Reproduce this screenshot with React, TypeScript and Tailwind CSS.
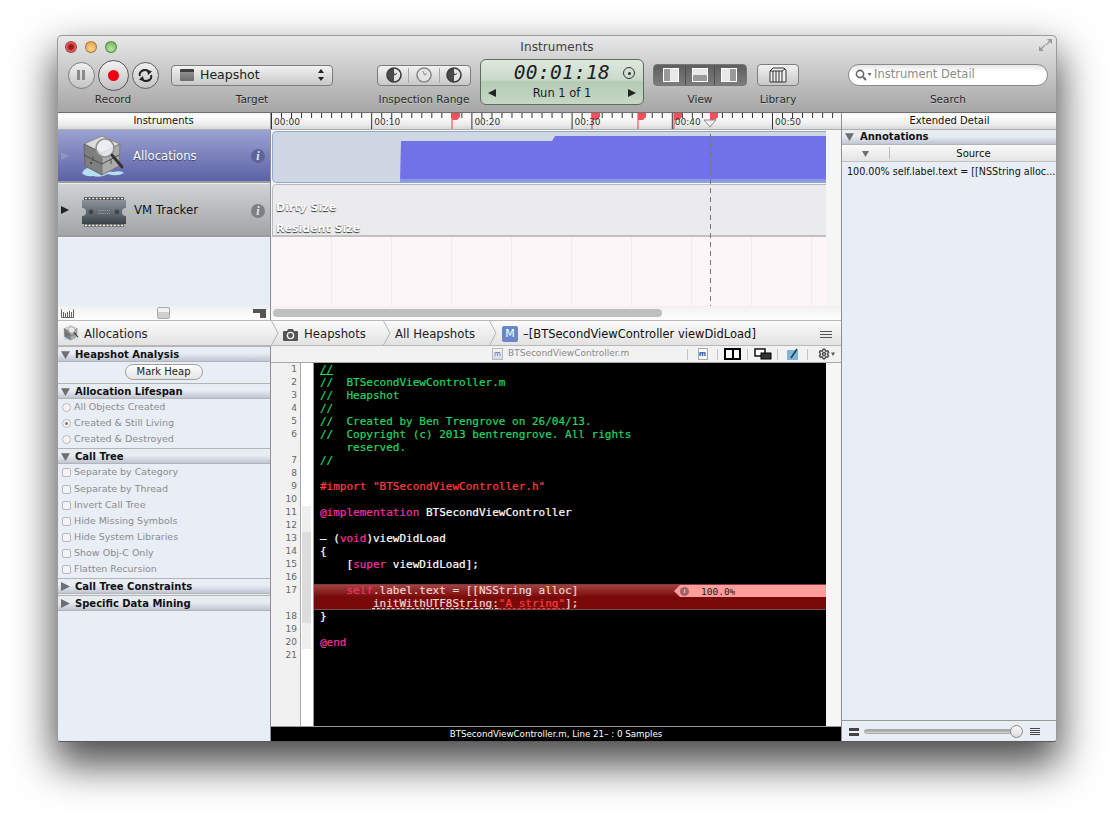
import React from "react";
import { Settings } from "lucide-react";

const Tri = ({ dir = "down", cls = "text-[#6f6f6f]", s = 8 }: { dir?: "down" | "right" | "left"; cls?: string; s?: number }) => (
  <svg width={s} height={s} viewBox="0 0 8 8" className={`${cls} shrink-0`}>
    <polygon points={dir === "down" ? "0,1 8,1 4,8" : dir === "right" ? "0,0 8,4 0,8" : "8,0 0,4 8,8"} fill="currentColor" />
  </svg>
);

const Light = ({ c }: { c: string }) => (
  <div className={`w-[12px] h-[12px] rounded-full border border-[#0000004d] flex items-center justify-center ${c}`} />
);

const Label = ({ children }: { children: React.ReactNode }) => (
  <div className="text-[10.5px] leading-[14px] text-[#2a2a2a] [text-shadow:0_1px_0_#ffffff55] whitespace-nowrap">{children}</div>
);

const ClockIcon = ({ mode }: { mode: "l" | "m" | "r" }) => (
  <svg width="18" height="18" viewBox="0 0 18 18">
    <circle cx="9" cy="9" r="7" fill="#e4e4e4" />
    {mode !== "m" && <path d="M9 2 A7 7 0 0 0 9 16 Z" fill="#4a4a4a" />}
    <circle cx="9" cy="9" r="7" fill="none" stroke={mode === "m" ? "#8a8a8a" : "#3d3d3d"} strokeWidth="1.6" />
    <path d="M8 5 L9.5 9 L12 7.5" fill="none" stroke={mode === "m" ? "#8a8a8a" : "#3d3d3d"} strokeWidth="1" />
  </svg>
);

const ViewIcon = ({ v }: { v: "l" | "b" | "r" }) => (
  <div className="w-[16px] h-[14px] bg-[#e8e8e8] border border-white relative overflow-hidden flex">
    {v === "l" && <div className="w-[6px] h-full bg-[#9a9a9a]" />}
    {v === "b" && <div className="w-full h-[6px] bg-[#9a9a9a] mt-auto" />}
    {v === "r" && <div className="w-[6px] h-full bg-[#9a9a9a] ml-auto" />}
  </div>
);

const CubeIcon = ({ size = 44 }: { size?: number }) => (
  <svg width={size} height={size} viewBox="0 0 44 44">
    <path d="M1 39 Q5 32 11 35 L32 38 Q41 36 43 39 Q36 43 27 40 Q20 44 12 42 Q5 43 1 39 Z" fill="#b5e0f4" />
    <g strokeLinejoin="round">
      <polygon points="21,2 39,10 21,19 3,10" fill="#dcdcdc" stroke="#8a8a8a" strokeWidth="1" />
      <polygon points="3,10 21,19 21,41 4,32" fill="#7f7f7f" stroke="#666" strokeWidth="1" />
      <polygon points="39,10 21,19 21,41 38,32" fill="#ababab" stroke="#7a7a7a" strokeWidth="1" />
    </g>
    <path d="M3 21 L21 30 L38 21 M12 22 L12 27 M30 25 L30 30" stroke="#4d4d4d" strokeWidth="1" fill="none" />
    <circle cx="10" cy="29" r="1" fill="#333" />
    <circle cx="24" cy="14" r="9" fill="#eef1f4" fillOpacity=".82" stroke="#8f8f8f" strokeWidth="1.6" />
    <path d="M31 21 L41 33" stroke="#333" strokeWidth="2.8" strokeLinecap="round" />
  </svg>
);

const ChipIcon = () => (
  <svg width="44" height="30" viewBox="0 0 44 30">
    <defs>
      <linearGradient id="chipBody" x1="0" y1="0" x2="0" y2="1">
        <stop offset="0" stopColor="#8a949a" />
        <stop offset=".55" stopColor="#5f696f" />
        <stop offset="1" stopColor="#3a4247" />
      </linearGradient>
    </defs>
    <rect x="2" y="0" width="40" height="3" fill="#4f4f4f" />
    <rect x="2" y="27" width="40" height="3" fill="#6a6a6a" />
    <path d="M3 1.5 h38 M3 28.5 h38" stroke="#f2f2f2" strokeWidth="1.4" strokeDasharray="2 1.6" />
    <path d="M0 3 H44 V11 A4 4 0 0 0 44 19 V27 H0 V19 A4 4 0 0 0 0 11 Z" fill="url(#chipBody)" />
    <circle cx="9" cy="15" r="2.4" fill="#3f474c" />
    <circle cx="35" cy="15" r="2.4" fill="#3f474c" />
    <path d="M16 13.5 h12 M16 16.5 h12" stroke="#8d979c" strokeWidth="1" strokeDasharray="1.5 .7" />
  </svg>
);

const CameraIcon = () => (
  <svg width="15" height="13" viewBox="0 0 15 13" className="shrink-0">
    <path d="M1 3 H4 L5 1 H10 L11 3 H14 Q15 3 15 4 V12 Q15 13 14 13 H1 Q0 13 0 12 V4 Q0 3 1 3 Z" fill="#555" />
    <circle cx="7.5" cy="7.5" r="3.8" fill="#f0f0f0" />
    <circle cx="7.5" cy="7.5" r="2.4" fill="#555" />
  </svg>
);

const Chevron = () => (
  <svg width="8" height="26" viewBox="0 0 8 26" className="shrink-0">
    <path d="M0 0 L7 13 L0 26" fill="none" stroke="#b5b5b5" strokeWidth="1" />
  </svg>
);

const Section = ({ title, open = true }: { title: string; open?: boolean }) => (
  <div className="h-[16px] shrink-0 flex items-center pl-[4px] border-y border-[#b4b4b4] bg-[linear-gradient(#e8ecf3_0%,#e8ecf3_45%,#bfc5d3_100%)] text-[10px] font-bold text-[#111] -mb-[1px]">
    <Tri dir={open ? "down" : "right"} s={9} />
    <span className="ml-[5px]">{title}</span>
  </div>
);

const Opt = ({ label, kind, on }: { label: string; kind: "r" | "c"; on?: boolean }) => (
  <div className="h-[16px] flex items-center pl-[5px] text-[9.5px] text-[#8c8c8c] whitespace-nowrap">
    <div className={`w-[9px] h-[9px] border border-[#b8b8b8] bg-[#f3f4f7] flex items-center justify-center ${kind === "r" ? "rounded-full" : "rounded-[2px]"}`}>
      {on && <div className="w-[3px] h-[3px] rounded-full bg-[#777]" />}
    </div>
    <span className="ml-[3px]">{label}</span>
  </div>
);

const G = "text-[#1fd765]";
const P = "text-[#f5309f]";
const R = "text-[#ff3d3d]";

type Line = { n?: number; c?: React.ReactNode; m?: "l" | "d" };
const lines: Line[] = [
  { n: 1, c: <span className={`${G} underline`}>//</span> },
  { n: 2, c: <span className={G}>//  BTSecondViewController.m</span> },
  { n: 3, c: <span className={G}>//  Heapshot</span> },
  { n: 4, c: <span className={G}>//</span> },
  { n: 5, c: <span className={G}>//  Created by Ben Trengrove on 26/04/13.</span> },
  { n: 6, c: <span className={G}>//  Copyright (c) 2013 bentrengrove. All rights</span> },
  { c: <span className={G}>    reserved.</span> },
  { n: 7, c: <span className={G}>//</span> },
  { n: 8 },
  { n: 9, c: <span className={R}>#import "BTSecondViewController.h"</span> },
  { n: 10 },
  { n: 11, m: "l", c: <><span className={P}>@implementation</span> BTSecondViewController</> },
  { n: 12, m: "l" },
  { n: 13, m: "d", c: <>– (<span className={P}>void</span>)viewDidLoad</> },
  { n: 14, m: "d", c: "{" },
  { n: 15, m: "d", c: <>    [<span className={P}>super</span> viewDidLoad];</> },
  { n: 16, m: "d" },
];
const after: Line[] = [
  { n: 18, m: "d", c: "}" },
  { n: 19, m: "l" },
  { n: 20, m: "l", c: <span className={P}>@end</span> },
  { n: 21 },
];

const Gutter = ({ n, m, h = "h-[13px]" }: { n?: number; m?: "l" | "d"; h?: string }) => (
  <div className={`flex shrink-0 ${h}`}>
    <div className="w-[30px] shrink-0 pr-[3px] text-right text-[9px] leading-[13px] text-[#666] bg-[#f1f1f1] border-r border-[#aaa] font-['DejaVu_Sans']">{n}</div>
    <div className="w-[13px] shrink-0 bg-white pl-[1px] pr-[2px] border-r border-[#999]">
      <div className={`h-full ${m === "d" ? "bg-[#dcdcdc]" : m === "l" ? "bg-[#efefef]" : ""}`} />
    </div>
  </div>
);

const CodeLine = ({ l }: { l: Line }) => (
  <div className="flex h-[13px] leading-[13px]">
    <Gutter n={l.n} m={l.m} />
    <pre className="flex-1 bg-black text-white pl-[6px] font-['DejaVu_Sans_Mono'] text-[11px] leading-[13px] [-webkit-text-stroke:0.2px] whitespace-pre overflow-hidden">{l.c}</pre>
  </div>
);

const Cell = ({ children }: { children: React.ReactNode }) => (
  <div className="w-[30px] shrink-0 h-[11px] border-l border-[#c4c4c4] flex items-center justify-center">{children}</div>
);

export default function App() {
  const minor = Array.from({ length: 57 }, (_, i) => i);
  return (
    <div className="w-[1114px] h-[821px] bg-white overflow-hidden pt-[35px] pl-[57px] font-['DejaVu_Sans',sans-serif]">
      <div className="w-[1000px] h-[707px] relative rounded-t-[5px] rounded-b-[3px] flex flex-col bg-[#e9edf6] shadow-[0_20px_40px_3px_rgba(0,0,0,0.7)]">
        <div className="absolute inset-0 z-10 pointer-events-none rounded-t-[5px] rounded-b-[3px] border border-[#9a9a9a] border-b-[#5a5a5a]" />
        {/* toolbar */}
        <div className="h-[78px] shrink-0 rounded-t-[5px] bg-[linear-gradient(#e9e9e9,#d4d4d4_30%,#a6a6a6)] border-b border-[#6f6f6f] relative">
          <div className="h-[23px] flex items-center px-[8px] relative">
            <div className="flex gap-[8px]">
              <Light c="bg-[radial-gradient(circle,#a01818_25%,#f0686a_70%)]" />
              <Light c="bg-[radial-gradient(circle_at_50%_70%,#fcd38a,#e89a3e)]" />
              <Light c="bg-[radial-gradient(circle_at_50%_70%,#b8e8a2,#62ab50)]" />
            </div>
            <div className="flex-1 text-center text-[12px] text-[#3f3f3f] pr-[52px] tracking-[0.1px]">Instruments</div>
            <svg width="15" height="14" viewBox="0 0 15 14" className="absolute right-[4px] top-[3px]">
              <path d="M9 1 H14 V6 Z M1 13 V8 L6 13 Z" fill="#9a9a9a" />
              <path d="M12 3 L8 7 M3 11 L7 7" stroke="#9a9a9a" strokeWidth="1.2" />
            </svg>
          </div>
          <div className="flex items-start pl-[10px]">
            {/* record */}
            <div className="flex flex-col items-center w-[92px]">
              <div className="h-[34px] flex items-center gap-[3px]">
                <div className="w-[27px] h-[27px] rounded-full border border-[#7d7d7d] bg-[linear-gradient(#f0f0f0,#c4c4c4)] flex items-center justify-center gap-[2px]">
                  <div className="w-[3px] h-[10px] bg-[#8a8a8a]" />
                  <div className="w-[3px] h-[10px] bg-[#8a8a8a]" />
                </div>
                <div className="w-[31px] h-[31px] rounded-full border border-[#555] bg-[linear-gradient(#f2f2f2,#c0c0c0)] flex items-center justify-center">
                  <div className="w-[11px] h-[11px] rounded-full bg-[#f00012]" />
                </div>
                <div className="w-[27px] h-[27px] rounded-full border border-[#5f5f5f] bg-[linear-gradient(#f0f0f0,#c4c4c4)] flex items-center justify-center">
                  <svg width="15" height="13" viewBox="0 0 15 13">
                    <path d="M2 7 A5 4.5 0 0 1 11 3.2 M13 6 A5 4.5 0 0 1 4 9.8" fill="none" stroke="#222" strokeWidth="2" />
                    <path d="M9 0.5 L14 2.5 L10 6 Z M6 12.5 L1 10.5 L5 7 Z" fill="#222" />
                  </svg>
                </div>
              </div>
              <Label>Record</Label>
            </div>
            {/* target */}
            <div className="flex flex-col items-center w-[162px] ml-[12px]">
              <div className="h-[34px] flex items-center w-full">
                <div className="w-full h-[21px] rounded-[4px] border border-[#7d7d7d] bg-[linear-gradient(#f2f2f2,#c8c8c8)] flex items-center pl-[8px] pr-[8px]">
                  <div className="w-[14px] h-[12px] bg-[linear-gradient(#3d3d3d_25%,#8f8f8f_25%,#6d6d6d)] rounded-[1px]" />
                  <span className="ml-[6px] text-[12.5px] text-[#222] flex-1">Heapshot</span>
                  <svg width="6" height="12" viewBox="0 0 6 12"><path d="M3 0 L6 4 H0 Z M3 12 L6 8 H0 Z" fill="#222" /></svg>
                </div>
              </div>
              <Label>Target</Label>
            </div>
            {/* inspection */}
            <div className="flex flex-col items-center w-[94px] ml-[44px]">
              <div className="h-[34px] flex items-center w-full">
                <div className="w-full h-[21px] rounded-[4px] border border-[#7d7d7d] bg-[linear-gradient(#f2f2f2,#c8c8c8)] flex items-center justify-around px-[4px]">
                  <ClockIcon mode="l" />
                  <div className="w-px h-[15px] bg-[#a5a5a5]" />
                  <ClockIcon mode="m" />
                  <div className="w-px h-[15px] bg-[#a5a5a5]" />
                  <ClockIcon mode="r" />
                </div>
              </div>
              <Label>Inspection Range</Label>
            </div>
            {/* lcd */}
            <div className="w-[164px] h-[46px] ml-[9px] mt-[1px] rounded-[6px] border border-[#5d6b5d] bg-[linear-gradient(#dfe9df,#c9d9c9_45%,#b4ccb4_50%,#c5d8c3)] flex flex-col items-center px-[6px]">
              <div className="h-[26px] w-full flex items-center justify-center relative">
                <span className="font-['DejaVu_Sans_Mono'] italic font-light text-[19.5px] tracking-[0.3px] text-[#1e1e1e]">00:01:18</span>
                <div className="absolute right-[2px] top-[7px] w-[12px] h-[12px] rounded-full border border-[#333] flex items-center justify-center">
                  <div className="w-[3px] h-[3px] rounded-full bg-[#333]" />
                </div>
              </div>
              <div className="flex w-full items-center justify-between text-[11.5px] text-[#1a1a1a] leading-[14px] px-[1px]">
                <Tri dir="left" cls="text-[#222]" />
                <span>Run 1 of 1</span>
                <Tri dir="right" cls="text-[#222]" />
              </div>
            </div>
            {/* view */}
            <div className="flex flex-col items-center w-[94px] ml-[9px]">
              <div className="h-[34px] flex items-center w-full">
                <div className="w-full h-[22px] rounded-[4px] bg-[linear-gradient(#5e5e5e,#7c7c7c)] border border-[#777] flex items-center justify-around px-[6px]">
                  <ViewIcon v="l" />
                  <div className="w-px h-full bg-[#4e4e4e]" />
                  <ViewIcon v="b" />
                  <div className="w-px h-full bg-[#4e4e4e]" />
                  <ViewIcon v="r" />
                </div>
              </div>
              <Label>View</Label>
            </div>
            {/* library */}
            <div className="flex flex-col items-center w-[42px] ml-[10px]">
              <div className="h-[34px] flex items-center w-full">
                <div className="w-full h-[22px] rounded-[4px] border border-[#7d7d7d] bg-[linear-gradient(#f2f2f2,#c8c8c8)] flex items-center justify-center">
                  <svg width="18" height="16" viewBox="0 0 18 16">
                    <path d="M1 4 L4 1 H15 L17 3 V15 H1 Z M1 4 H13 V15 M4 4 V15 M7 4 V15 M10 4 V15 M13 4 L16 2" fill="#eee" stroke="#333" strokeWidth="1" />
                  </svg>
                </div>
              </div>
              <Label>Library</Label>
            </div>
            {/* search */}
            <div className="flex flex-col items-center w-[200px] ml-[49px]">
              <div className="h-[34px] flex items-center w-full">
                <div className="w-full h-[22px] rounded-full border border-[#8a8a8a] bg-[linear-gradient(#e6e6e6,#ffffff_35%)] flex items-center pl-[6px]">
                  <svg width="17" height="12" viewBox="0 0 17 12">
                    <circle cx="5" cy="5" r="3.6" fill="none" stroke="#666" strokeWidth="1.6" />
                    <path d="M8 8 L11 11" stroke="#666" strokeWidth="2" />
                    <path d="M12.5 4 H16.5 L14.5 7 Z" fill="#666" />
                  </svg>
                  <span className="ml-[2px] text-[11.5px] text-[#8c8c8c]">Instrument Detail</span>
                </div>
              </div>
              <Label>Search</Label>
            </div>
          </div>
        </div>

        {/* body */}
        <div className="flex flex-1 min-h-0 rounded-b-[3px] overflow-hidden">
          <div className="flex-1 min-w-0 flex flex-col">
            {/* upper */}
            <div className="h-[207px] shrink-0 flex flex-col relative">
              <div className="flex h-[17px] shrink-0 bg-[linear-gradient(#f4f4f4,#ffffff_20%,#ececec_70%,#d8d8d8)] border-b border-[#b0b0b0]">
                <div className="w-[214px] shrink-0 text-center text-[10px] leading-[16px] text-[#111] border-r border-[#999]">Instruments</div>
                <div className="flex-1 relative overflow-hidden">
                  <svg width="570" height="16" viewBox="0 0 570 16" className="absolute left-0 top-0">
                    {minor.map((i) => (
                      <line key={i} x1={i * 10.02 + 0.5} x2={i * 10.02 + 0.5} y1="0" y2={i % 10 === 0 ? 16 : 5} stroke="#333" strokeWidth="1" />
                    ))}
                    {[181, 321, 367, 403].map((x) => (
                      <g key={x}>
                        <line x1={x} x2={x} y1="0" y2="16" stroke="#f03a46" strokeWidth="1" />
                        <path d={`M${x} 0 h8 v4 l-3 3 h-5 Z`} fill="#f4505c" />
                      </g>
                    ))}
                    <path d="M439 0 h8 v4 l-3 3 h-5 Z" fill="#f4505c" />
                    <path d="M433 7 H445 L439 14 Z" fill="#f4f4f4" stroke="#8a8a8a" />
                  </svg>
                  <div className="absolute left-0 top-0 flex text-[9px] leading-[16px] text-[#333]">
                    {["00:00", "00:10", "00:20", "00:30", "00:40", "00:50"].map((t) => (
                      <div key={t} className="w-[100.2px] pl-[3px] pt-[1px]">{t}</div>
                    ))}
                  </div>
                </div>
              </div>
              <div className="flex flex-1 min-h-0">
                {/* track list */}
                <div className="w-[214px] shrink-0 border-r border-[#8f8f8f] flex flex-col">
                  <div className="h-[53px] flex items-center pl-[4px] pr-[5px] bg-[linear-gradient(#9aa2d2,#5c62a6)] border-b-[2px] border-[#9b9b9b]">
                    <Tri dir="right" cls="text-[#8f95c0]" />
                    <div className="ml-[12px]"><CubeIcon /></div>
                    <span className="ml-[8px] pt-[2px] text-[11.7px] text-white flex-1 [text-shadow:0_1px_1px_#00000080]">Allocations</span>
                    <div className="w-[14px] h-[14px] rounded-full bg-[#5f6599] text-[#e8e8f4] text-[12px] font-bold italic font-['Liberation_Serif'] flex items-center justify-center">i</div>
                  </div>
                  <div className="h-[53px] mt-[1px] flex items-center pl-[4px] pr-[5px] bg-[linear-gradient(#d0d3d5,#a2a5a8)] border-b-[2px] border-[#9b9b9b]">
                    <Tri dir="right" cls="text-[#222]" />
                    <div className="ml-[13px] mt-[4px]"><ChipIcon /></div>
                    <span className="ml-[8px] pt-[3px] text-[11.7px] text-[#111] flex-1">VM Tracker</span>
                    <div className="w-[14px] h-[14px] mt-[2px] rounded-full bg-[#7d7f82] text-[#e8e8e8] text-[12px] font-bold italic font-['Liberation_Serif'] flex items-center justify-center">i</div>
                  </div>
                  <div className="flex-1 bg-[#e9edf6]" />
                  <div className="h-[14px] bg-[linear-gradient(#f0f0f0,#ffffff)] flex items-center justify-between px-[4px] relative">
                    <svg width="13" height="9" viewBox="0 0 13 9"><path d="M.5.5 V8.5 H12.5 V.5 M2.5 8 V3 M4.5 8 V4 M6.5 8 V3 M8.5 8 V2 M10.5 8 V3" fill="none" stroke="#666" /></svg>
                    <div className="w-[13px] h-[12px] rounded-[2px] border border-[#aaa] bg-[linear-gradient(#f2f2f2_45%,#cfcfcf_45%)]" />
                    <svg width="13" height="9" viewBox="0 0 13 9"><path d="M0 0 H13 V9 H7 V4 H0 Z" fill="#555" /></svg>
                  </div>
                </div>
                {/* tracks */}
                <div className="flex-1 flex flex-col min-w-0 relative bg-[#f6f6f6]">
                  <div className="h-[53px] pt-[1px] pr-[15px] pl-[1px]">
                    <div className="h-[52px] rounded-l-[5px] border border-[#8eaad0] border-r-0 bg-[#cfd7e3] overflow-hidden">
                      <svg width="553" height="50" viewBox="0 0 553 50" className="block">
                        <path d="M127 50 L128 9 H279 L282 4 H553 V50 Z" fill="#7272e8" />
                        <rect x="127" y="47" width="426" height="3" fill="#8e96e6" />
                      </svg>
                    </div>
                  </div>
                  <div className="h-[53px] mt-[1px] pr-[15px] pl-[1px]">
                    <div className="h-[53px] rounded-tl-[5px] border-t border-l border-[#b9b9b9] bg-[#ebebee] border-b-[2px] border-b-[#c4c0c0] text-[11px] text-white [text-shadow:0_1px_1px_#333] font-semibold pl-[3px]">
                      <div className="h-[14px]" />
                      <div className="leading-[18px]">Dirty Size</div>
                      <div className="leading-[12px] mt-[6px]">Resident Size</div>
                    </div>
                  </div>
                  <div className="flex-1 mr-[15px] ml-[1px] bg-[#fdf6f8] flex overflow-hidden">
                    {Array.from({ length: 10 }, (_, i) => (
                      <div key={i} className="h-full w-[60px] shrink-0 border-r border-[#f3ebee]" />
                    ))}
                  </div>
                  <div className="h-[14px] bg-[linear-gradient(#f0f0f0,#ffffff)] flex items-center pl-[2px]">
                    <div className="w-[389px] h-[8px] rounded-full bg-[#bfbfbf]" />
                  </div>
                  <div className="absolute left-[439px] top-[4px] bottom-[14px] w-px bg-[repeating-linear-gradient(#777_0_5px,transparent_5px_9px)]" />
                </div>
              </div>
            </div>

            {/* lower */}
            <div className="flex-1 min-h-0 flex flex-col">
              <div className="h-[26px] shrink-0 flex items-center bg-[linear-gradient(#fbfbfb,#e2e2e2)] border-y border-[#b8b8b8] text-[11.7px] text-[#222]">
                <div className="w-[214px] shrink-0 flex items-center pl-[6px]">
                  <CubeIcon size={16} />
                  <span className="ml-[5px] pt-[4px]">Allocations</span>
                </div>
                <Chevron />
                <div className="ml-[4px] mt-[2px]"><CameraIcon /></div>
                <span className="ml-[6px] w-[79px] pt-[4px]">Heapshots</span>
                <Chevron />
                <span className="ml-[4px] w-[94px] pt-[4px]">All Heapshots</span>
                <Chevron />
                <div className="ml-[5px] mt-[2px] w-[16px] h-[16px] rounded-[2px] bg-[#6a86c8] text-white text-[11px] flex items-center justify-center">M</div>
                <span className="ml-[5px] pt-[4px] text-[11.5px] text-[#111]">–[BTSecondViewController viewDidLoad]</span>
                <div className="ml-auto mr-[9px] mt-[2px] w-[12px] flex flex-col gap-[2px]">
                  <div className="h-px bg-[#555]" /><div className="h-px bg-[#555]" /><div className="h-px bg-[#555]" />
                </div>
              </div>
              <div className="flex-1 min-h-0 flex">
                {/* config panel */}
                <div className="w-[214px] shrink-0 border-r border-[#8f8f8f] bg-[#e9edf6] flex flex-col overflow-hidden">
                  <Section title="Heapshot Analysis" />
                  <div className="h-[22px] flex items-center justify-center">
                    <div className="w-[78px] h-[16px] rounded-full border border-[#a0a0a0] bg-[linear-gradient(#ffffff,#e4e4e4)] text-[10px] leading-[14px] text-center text-[#222]">Mark Heap</div>
                  </div>
                  <Section title="Allocation Lifespan" />
                  <div className="pt-[1px] pb-[1px]">
                    <Opt label="All Objects Created" kind="r" />
                    <Opt label="Created & Still Living" kind="r" on />
                    <Opt label="Created & Destroyed" kind="r" />
                  </div>
                  <Section title="Call Tree" />
                  <div className="pt-[1px] pb-[1px]">
                    <Opt label="Separate by Category" kind="c" />
                    <div className="h-px" />
                    <Opt label="Separate by Thread" kind="c" />
                    <Opt label="Invert Call Tree" kind="c" />
                    <Opt label="Hide Missing Symbols" kind="c" />
                    <Opt label="Hide System Libraries" kind="c" />
                    <Opt label="Show Obj-C Only" kind="c" />
                    <Opt label="Flatten Recursion" kind="c" />
                  </div>
                  <Section title="Call Tree Constraints" open={false} />
                  <div className="h-[2px] shrink-0" />
                  <Section title="Specific Data Mining" open={false} />
                </div>
                {/* editor */}
                <div className="flex-1 min-w-0 flex flex-col">
                  <div className="h-[17px] shrink-0 bg-[#f2f2f2] border-b border-[#a8a8a8] flex items-center text-[9px] text-[#8a8a8a]">
                    <div className="ml-[221px] w-[11px] h-[12px] bg-[linear-gradient(#f4f4f4,#d4d8e6)] border border-[#b8b8b8] text-[7px] leading-[10px] text-center text-[#5566aa]">m</div>
                    <span className="ml-[5px] w-[179px]">BTSecondViewController.m</span>
                    <Cell>
                      <div className="w-[10px] h-[12px] bg-white border border-[#aaa] text-[7px] leading-[10px] text-center font-bold text-[#334499]">m</div>
                    </Cell>
                    <Cell>
                      <div className="w-[17px] h-[12px] border-2 border-black flex"><div className="flex-1 bg-white border-r-2 border-black" /><div className="flex-1 bg-white" /></div>
                    </Cell>
                    <Cell>
                      <svg width="18" height="12" viewBox="0 0 18 12"><rect x="1" y="1" width="10" height="7" fill="#fff" stroke="#000" strokeWidth="1.4" /><rect x="7" y="5" width="10" height="6" fill="#333" stroke="#000" /></svg>
                    </Cell>
                    <Cell>
                      <svg width="12" height="12" viewBox="0 0 12 12"><rect x="0" y="2" width="11" height="10" fill="#7fb4dc" /><path d="M4 10 L10 1" stroke="#244" strokeWidth="1.6" /></svg>
                    </Cell>
                    <div className="h-[11px] border-l border-[#c4c4c4] pl-[10px] flex items-center">
                      <Settings size={12} strokeWidth={3} className="text-[#555]" />
                      <Tri cls="text-[#555] ml-[1px]" s={4} />
                    </div>
                  </div>
                  <div className="flex-1 min-h-0 flex bg-[#f1f1f1]">
                    <div className="w-[555px] shrink-0 flex flex-col overflow-hidden">
                      {lines.map((l, i) => <CodeLine key={i} l={l} />)}
                      <div className="flex h-[26px] shrink-0">
                        <Gutter n={17} m="d" h="h-[26px]" />
                        <div className="flex-1 relative bg-[linear-gradient(#5a3a3a,#a24040_1px,#7a0a0a_13px,#7a0a0a_25px,#6a5050_25px)] font-['DejaVu_Sans_Mono'] text-[11px] leading-[13px] whitespace-pre pl-[6px] [-webkit-text-stroke:0.2px]">
                          <pre className="text-[#f0d4d4] font-['DejaVu_Sans_Mono']">{"    "}<span className="text-[#f0356c]">self</span>.label.text = [[NSString alloc]</pre>
                          <pre className="text-[#f0d4d4] font-['DejaVu_Sans_Mono']">{"        "}<span className="underline decoration-dashed">initWithUTF8String:</span><span className="text-[#ff3b3b] underline decoration-dashed">"A string"</span>];</pre>
                          <div className="absolute right-0 top-[1px] h-[12px] w-[152px] bg-[#ff9c9c] [clip-path:polygon(6px_0,100%_0,100%_100%,6px_100%,0_50%)] flex items-center pl-[6px] text-[#222] [-webkit-text-stroke:0px]">
                            <div className="w-[9px] h-[9px] rounded-full bg-[#a06464] text-[7px] leading-[9px] text-center italic text-white font-['Liberation_Serif']">i</div>
                            <span className="ml-[12px] text-[9.5px]">100.0%</span>
                          </div>
                        </div>
                      </div>
                      {after.map((l, i) => <CodeLine key={i} l={l} />)}
                      <div className="flex-1 flex min-h-0">
                        <Gutter h="h-full" />
                        <div className="flex-1 bg-black" />
                      </div>
                    </div>
                    <div className="flex-1 bg-[#f6f6f6]" />
                  </div>
                  <div className="h-[16px] shrink-0 bg-black border-t border-[#999] text-white text-[8.7px] leading-[15px] text-center">BTSecondViewController.m, Line 21– : 0 Samples</div>
                </div>
              </div>
            </div>
          </div>

          {/* right */}
          <div className="w-[216px] shrink-0 border-l border-[#8f8f8f] flex flex-col bg-[#e9edf6]">
            <div className="h-[17px] shrink-0 bg-[linear-gradient(#f4f4f4,#ffffff_20%,#ececec_70%,#d8d8d8)] border-b border-[#b0b0b0] text-center text-[10px] leading-[16px] text-[#111]">Extended Detail</div>
            <div className="h-[15px] shrink-0 flex items-center pl-[3px] pb-[2px] border-b border-[#b4b4b4] bg-[linear-gradient(#e8ecf3_0%,#e8ecf3_45%,#bfc5d3_100%)] text-[10px] font-bold text-[#111]">
              <Tri s={9} />
              <span className="ml-[6px]">Annotations</span>
            </div>
            <div className="h-[17px] shrink-0 flex items-center bg-[linear-gradient(#fafafa,#e4e4e4)] border-b border-[#c0c0c0] text-[10px] text-[#111]">
              <div className="w-[48px] h-[12px] flex items-center justify-center border-r border-[#bbb]"><Tri s={7} /></div>
              <div className="flex-1 text-center">Source</div>
            </div>
            <div className="pl-[5px] pt-[3px] text-[9.6px] leading-[13px] text-[#111] whitespace-nowrap overflow-hidden">100.00% self.label.text = [[NSString alloc...</div>
            <div className="flex-1" />
            <div className="h-[22px] shrink-0 border-t border-[#9a9a9a] flex items-center px-[7px]">
              <div className="w-[10px] flex flex-col gap-[2px]"><div className="h-[3px] bg-[#444]" /><div className="h-[3px] bg-[#444]" /></div>
              <div className="ml-[5px] w-[156px] h-[5px] rounded-full bg-[linear-gradient(#9c9c9c,#d8d8d8)] border border-[#aaa] relative">
                <div className="absolute right-[-4px] top-[-5px] w-[13px] h-[13px] rounded-full border border-[#8a8a8a] bg-[linear-gradient(#f8f8f8,#dcdcdc)]" />
              </div>
              <div className="ml-[10px] w-[10px] flex flex-col gap-[1px]"><div className="h-px bg-[#444]" /><div className="h-px bg-[#444]" /><div className="h-px bg-[#444]" /><div className="h-px bg-[#444]" /></div>
            </div>
          </div>
        </div>
      </div>
    </div>
  );
}
